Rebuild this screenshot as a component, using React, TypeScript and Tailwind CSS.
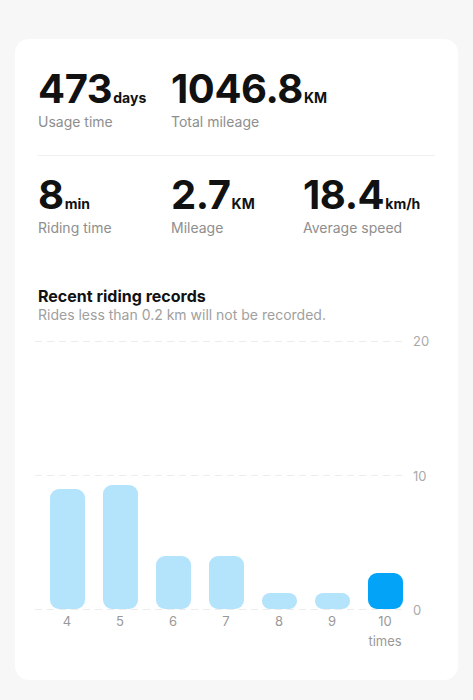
import React from "react";

const font = { fontFamily: "Inter, 'Noto Sans', sans-serif" };

function Stat({ value, unit, label }: { value: string; unit: string; label: string }) {
  return (
    <div>
      <div className="flex items-baseline h-[38px] leading-[38px]">
        <span className="text-[40px] font-bold text-[#111] tracking-[-0.4px]">{value}</span>
        <span className="ml-[1px] text-[14px] font-bold text-[#111]">{unit}</span>
      </div>
      <div className="mt-[4px] text-[14px] leading-[20px] text-[#8e8e8e]">{label}</div>
    </div>
  );
}

const bars = [
  { x: "4", h: 119.5 },
  { x: "5", h: 124 },
  { x: "6", h: 53 },
  { x: "7", h: 53 },
  { x: "8", h: 16 },
  { x: "9", h: 16 },
  { x: "10", h: 35.5, active: true },
];

export default function App() {
  return (
    <div className="min-h-[700px] bg-[#f7f7f7] pt-[39px] px-[15px]" style={font}>
      <div className="h-[641px] rounded-[14px] bg-white pt-[31px] px-[23px]">
        <div className="grid grid-cols-[133px_133px_1fr]">
          <Stat value="473" unit="days" label="Usage time" />
          <Stat value="1046.8" unit="KM" label="Total mileage" />
        </div>
        <div className="mt-[23px] h-px bg-[#f0f0f0]" />
        <div className="mt-[20px] grid grid-cols-[133px_132px_1fr]">
          <Stat value="8" unit="min" label="Riding time" />
          <Stat value="2.7" unit="KM" label="Mileage" />
          <Stat value="18.4" unit="km/h" label="Average speed" />
        </div>

        <div className="mt-[48px] text-[16px] leading-[20px] font-bold text-[#111]">Recent riding records</div>
        <div className="text-[14px] leading-[18px] text-[#a0a0a0]">Rides less than 0.2 km will not be recorded.</div>

        <div className="mt-[17px] ml-[-3px] flex">
          <div className="w-[368px] shrink-0">
            <div className="relative h-[269px] flex items-end pl-[5.5px] pb-[1.5px]">
              <svg className="absolute left-0 top-0" width="368" height="270">
                {[0.5, 134.5, 268.5].map((y) => (
                  <line key={y} x1="0" x2="368" y1={y} y2={y} stroke="#ececec" strokeWidth="1" strokeDasharray="7 5" />
                ))}
              </svg>
              {bars.map((b) => (
                <div key={b.x} className="relative w-[53px] shrink-0 flex justify-center">
                  <div
                    className={
                      "w-[35px] rounded-[9px] " + (b.active ? "bg-[#03a4f8]" : "bg-[#b4e3fc]")
                    }
                    style={{ height: b.h }}
                  />
                </div>
              ))}
            </div>
            <div className="flex pl-[5.5px] mt-[3px]">
              {bars.map((b) => (
                <div key={b.x} className="w-[53px] shrink-0 flex flex-col items-center text-[13px] leading-[16px] text-[#999]">
                  <span>{b.x}</span>
                  {b.active && <span className="mt-[4px]">times</span>}
                </div>
              ))}
            </div>
          </div>
          <div className="ml-[10px] h-[283px] mt-[-7px] flex flex-col justify-between text-[13px] leading-[14px] text-[#aaa]">
            <span>20</span>
            <span>10</span>
            <span>0</span>
          </div>
        </div>
      </div>
    </div>
  );
}
